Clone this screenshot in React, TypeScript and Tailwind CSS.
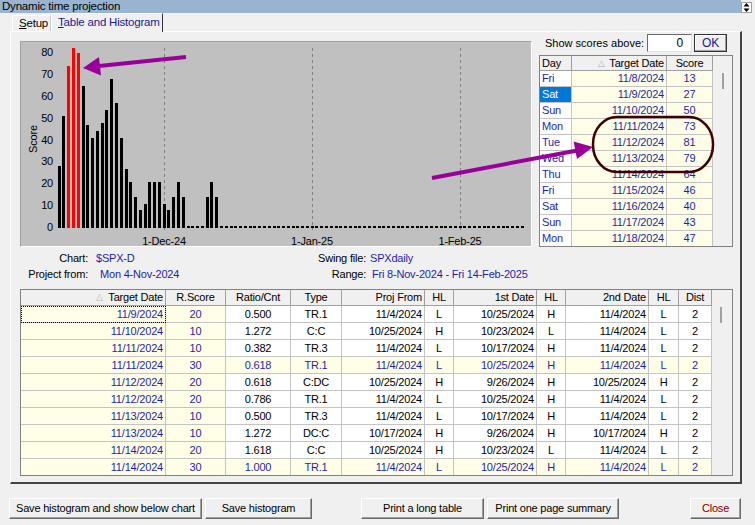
import React from "react";

type Col = { w: string; align: string; head: string; sort?: boolean };

const scores = [
  0, 27, 50, 73, 81, 79, 64, 46, 40, 43, 47, 53, 67, 56, 40, 26, 20, 13, 7, 10, 20, 20, 20, 10, 7, 13, 20, 13, 0, 0, 0, 0, 13, 20, 13,
];

const dayRows = [
  ["Fri", "11/8/2024", "13"],
  ["Sat", "11/9/2024", "27"],
  ["Sun", "11/10/2024", "50"],
  ["Mon", "11/11/2024", "73"],
  ["Tue", "11/12/2024", "81"],
  ["Wed", "11/13/2024", "79"],
  ["Thu", "11/14/2024", "64"],
  ["Fri", "11/15/2024", "46"],
  ["Sat", "11/16/2024", "40"],
  ["Sun", "11/17/2024", "43"],
  ["Mon", "11/18/2024", "47"],
];

const cols: Col[] = [
  { w: "w-[145px]", align: "justify-end", head: "Target Date", sort: true },
  { w: "w-[60px]", align: "justify-center", head: "R.Score" },
  { w: "w-[65px]", align: "justify-center", head: "Ratio/Cnt" },
  { w: "w-[51px]", align: "justify-center", head: "Type" },
  { w: "w-[83px]", align: "justify-end", head: "Proj From" },
  { w: "w-[29px]", align: "justify-center", head: "HL" },
  { w: "w-[83px]", align: "justify-end", head: "1st Date" },
  { w: "w-[29px]", align: "justify-center", head: "HL" },
  { w: "w-[83px]", align: "justify-end", head: "2nd Date" },
  { w: "w-[30px]", align: "justify-center", head: "HL" },
  { w: "w-[33px]", align: "justify-center", head: "Dist" },
];

const rows = [
  ["11/9/2024", "20", "0.500", "TR.1", "11/4/2024", "L", "10/25/2024", "H", "11/4/2024", "L", "2"],
  ["11/10/2024", "10", "1.272", "C:C", "10/25/2024", "H", "10/23/2024", "L", "11/4/2024", "L", "2"],
  ["11/11/2024", "10", "0.382", "TR.3", "11/4/2024", "L", "10/17/2024", "H", "11/4/2024", "L", "2"],
  ["11/11/2024", "30", "0.618", "TR.1", "11/4/2024", "L", "10/25/2024", "H", "11/4/2024", "L", "2"],
  ["11/12/2024", "20", "0.618", "C:DC", "10/25/2024", "H", "9/26/2024", "H", "10/25/2024", "H", "2"],
  ["11/12/2024", "20", "0.786", "TR.1", "11/4/2024", "L", "10/25/2024", "H", "11/4/2024", "L", "2"],
  ["11/13/2024", "10", "0.500", "TR.3", "11/4/2024", "L", "10/17/2024", "H", "11/4/2024", "L", "2"],
  ["11/13/2024", "10", "1.272", "DC:C", "10/17/2024", "H", "9/26/2024", "H", "10/17/2024", "H", "2"],
  ["11/14/2024", "20", "1.618", "C:C", "10/25/2024", "H", "10/23/2024", "L", "11/4/2024", "L", "2"],
  ["11/14/2024", "30", "1.000", "TR.1", "11/4/2024", "L", "10/25/2024", "H", "11/4/2024", "L", "2"],
];

function Histogram() {
  const days = Array.from({ length: 98 }, (_, i) => i + 1);
  const grid = [
    { x: 143, label: "1-Dec-24" },
    { x: 291, label: "1-Jan-25" },
    { x: 439, label: "1-Feb-25" },
  ];
  return (
    <div className="mt-[7px] w-[512px] h-[206px] bg-[#c0c0c0] border-t border-l border-t-[#a0a0a0] border-l-[#a0a0a0] border-r border-b border-r-white border-b-white">
      <svg width="510" height="204" className="block" fontFamily="Liberation Sans, Arial, sans-serif" fontSize="11">
        {grid.map((g) => (
          <g key={g.label}>
            <line x1={g.x + 0.5} y1={6} x2={g.x + 0.5} y2={188} stroke="#808080" strokeDasharray="3 3" />
            <text x={g.x} y={203} textAnchor="middle" fill="#000">
              {g.label}
            </text>
          </g>
        ))}
        {[0, 10, 20, 30, 40, 50, 60, 70, 80].map((v) => (
          <text key={v} x={32} y={185 - v * 2.1875 + 4} textAnchor="end" fill="#000">
            {v}
          </text>
        ))}
        <text x={16} y={97} textAnchor="middle" transform="rotate(-90 16 97)" fill="#000">
          Score
        </text>
        {days.map((d) => {
          const v = scores[d] ?? 0;
          const h = v * 2.1875;
          const x = Math.round(33.5 + 4.774 * d - 1.6);
          const red = d >= 3 && d <= 5;
          return (
            <rect
              key={d}
              x={x}
              y={183.5 - h}
              width={red ? 3.4 : 3}
              height={h + 2}
              fill={red ? "#ff0000" : "#000"}
              shapeRendering="crispEdges"
            />
          );
        })}
      </svg>
    </div>
  );
}

function ScoreTable() {
  return (
    <div className="mt-[3px] h-[192px] border border-[#828282] bg-[#f0f0f0] overflow-hidden flex">
      <div className="flex flex-col">
        <div className="flex h-[15px] leading-[14px]">
          <div className="w-[32px] pl-[2px] border-r border-b border-[#a0a0a0]">Day</div>
          <div className="w-[95px] pr-[2px] flex justify-end border-r border-b border-[#a0a0a0]">
            <span className="text-[#b0b0b0] mr-[5px] text-[9px]">△</span>
            Target Date
          </div>
          <div className="w-[46px] flex justify-center border-r border-b border-[#a0a0a0]">Score</div>
        </div>
        {dayRows.map((r, i) => (
          <div key={i} className="flex h-[16px] leading-[15px] text-[#1f1fa6]">
            <div
              className={
                i === 1
                  ? "w-[32px] pl-[2px] bg-[#0078d7] text-white border-r border-b border-[#c4c4c4]"
                  : "w-[32px] pl-[2px] bg-white border-r border-b border-[#c4c4c4]"
              }
            >
              {r[0]}
            </div>
            <div className="w-[95px] pr-[2px] text-right bg-[#ffffe8] border-r border-b border-[#c4c4c4]">{r[1]}</div>
            <div className="w-[46px] text-center bg-[#ffffe8] border-r border-b border-[#c4c4c4]">{r[2]}</div>
          </div>
        ))}
      </div>
      <div className="w-[19px]">
        <div className="mt-[17px] ml-[9px] w-[2px] h-[16px] bg-[#a0a0a0]" />
      </div>
    </div>
  );
}

function ProjectionTable() {
  return (
    <div className="mt-[7px] w-[713px] h-[187px] border border-[#828282] bg-[#f0f0f0] overflow-hidden flex">
      <div className="flex flex-col">
        <div className="flex h-[16px] leading-[15px]">
          {cols.map((c, i) => (
            <div key={i} className={`${c.w} ${c.align} flex px-[2px] border-r border-b border-[#a0a0a0]`}>
              {c.sort ? <span className="text-[#b0b0b0] mr-[6px] text-[9px]">△</span> : null}
              {c.head}
            </div>
          ))}
        </div>
        {rows.map((r, ri) => {
          const hot = r[1] === "30";
          return (
            <div key={ri} className="flex h-[17px] leading-[16px]">
              {r.map((v, ci) => {
                const yellow = hot || ci < 2;
                const focus = ri === 0 && ci === 0;
                return (
                  <div
                    key={ci}
                    className={`${cols[ci].w} ${cols[ci].align} flex px-[2px] border-r border-b border-[#c4c4c4] ${
                      yellow ? "bg-[#ffffe8] text-[#1f1fa6]" : "bg-white text-black"
                    } ${focus ? "outline-1 outline-dotted outline-black -outline-offset-1" : ""}`}
                  >
                    {v}
                  </div>
                );
              })}
            </div>
          );
        })}
      </div>
      <div className="w-[20px]">
        <div className="mt-[17px] ml-[8px] w-[2px] h-[16px] bg-[#a0a0a0]" />
      </div>
    </div>
  );
}

function Btn({ w, children, red }: { w: string; children: React.ReactNode; red?: boolean }) {
  return (
    <button
      className={`${w} h-[21px] bg-[#f0f0f0] border border-t-white border-l-white border-r-[#696969] border-b-[#696969] shadow-[inset_-1px_-1px_0_#a0a0a0] flex items-center justify-center whitespace-nowrap ${
        red ? "text-[#800000]" : "text-black"
      }`}
    >
      {children}
    </button>
  );
}

export default function App() {
  return (
    <div className="relative w-[755px] h-[525px] bg-[#f0f0f0] overflow-hidden text-[11px] tracking-[-0.2px] text-black whitespace-nowrap font-['Liberation_Sans',Arial,sans-serif]">
      <div className="flex h-[13px]">
        <div className="w-[741px] bg-[#99b4d1] pl-[2px] leading-[13px] text-[11.5px]">Dynamic time projection</div>
        <div className="mt-[2px] w-[11px] h-[11px] bg-white border border-[#a0a0a0] flex items-center justify-center">
          <svg width="7" height="9" viewBox="0 0 7 9">
            <path d="M3.5 0 L6.5 3.5 L0.5 3.5 Z M3.5 9 L6.5 5.5 L0.5 5.5 Z" fill="#000" />
          </svg>
        </div>
      </div>

      <div className="flex items-end h-[18px] pl-[12px] relative z-10">
        <div className="w-[39px] h-[16px] border-l border-t border-white border-r border-r-[#c8c8c8] pl-[6px] leading-[15px] text-[11.5px]">
          <u>S</u>etup
        </div>
        <div className="w-[112px] h-[19px] -mb-[1px] bg-[#f0f0f0] border-l border-t border-white border-r border-r-[#333] pl-[6px] leading-[17px] text-[11.5px] text-[#1a1a8c]">
          <u>T</u>able and Histogram
        </div>
      </div>

      <div className="ml-[10px] w-[732px] h-[453px] border-l border-t border-l-white border-t-white border-r-2 border-b-2 border-r-[#444] border-b-[#444] pt-[2px] pl-[9px]">
        <div className="flex items-start gap-[7px]">
          <Histogram />
          <div className="w-[194px]">
            <div className="flex items-center h-[18px]">
              <div className="flex-1 pl-[6px] tracking-normal text-[11px]">Show scores above:</div>
              <div className="w-[45px] h-[18px] bg-white border border-t-[#696969] border-l-[#696969] border-r-[#e3e3e3] border-b-[#e3e3e3] text-right pr-[8px] leading-[16px] text-[12px]">
                0
              </div>
              <div className="ml-[2px] mr-[6px] w-[33px] h-[18px] border border-[#333] bg-[#f0f0f0] shadow-[inset_-1px_-1px_0_#a0a0a0,inset_1px_1px_0_#fff] flex items-center justify-center text-[12px] text-[#1a1a8c]">
                OK
              </div>
            </div>
            <ScoreTable />
          </div>
        </div>

        <div className="mt-[3px]">
          <div className="flex h-[16px] leading-[16px]">
            <div className="w-[68px] text-right">Chart:</div>
            <div className="w-[212px] pl-[8px] text-[#1f1fa6]">$SPX-D</div>
            <div className="w-[66px] text-right">Swing file:</div>
            <div className="pl-[4px] text-[#1f1fa6]">SPXdaily</div>
          </div>
          <div className="flex h-[16px] leading-[16px]">
            <div className="w-[68px] text-right">Project from:</div>
            <div className="w-[212px] pl-[12px] text-[#1f1fa6]">Mon 4-Nov-2024</div>
            <div className="w-[66px] text-right">Range:</div>
            <div className="pl-[6px] text-[#1f1fa6]">Fri 8-Nov-2024 - Fri 14-Feb-2025</div>
          </div>
        </div>

        <ProjectionTable />
      </div>

      <div className="flex mt-[14px] pl-[9px]">
        <Btn w="w-[193px]">Save histogram and show below chart</Btn>
        <div className="w-[3px]" />
        <Btn w="w-[107px]">Save histogram</Btn>
        <div className="w-[49px]" />
        <Btn w="w-[123px]">Print a long table</Btn>
        <div className="w-[3px]" />
        <Btn w="w-[132px]">Print one page summary</Btn>
        <div className="w-[71px]" />
        <Btn w="w-[51px]" red>
          Close
        </Btn>
      </div>

      <svg className="absolute inset-0 pointer-events-none" width="755" height="525">
        <line x1="186" y1="57" x2="99" y2="66" stroke="#990099" strokeWidth="4" />
        <polygon points="83,68 101,75.5 99,57" fill="#990099" />
        <line x1="432" y1="178" x2="577" y2="150.5" stroke="#990099" strokeWidth="4" />
        <polygon points="593,147 577,159 573.6,141.5" fill="#990099" />
        <rect x="593" y="117" width="120" height="55" rx="24" ry="27" fill="none" stroke="#3d0000" strokeWidth="2.5" />
      </svg>
    </div>
  );
}
